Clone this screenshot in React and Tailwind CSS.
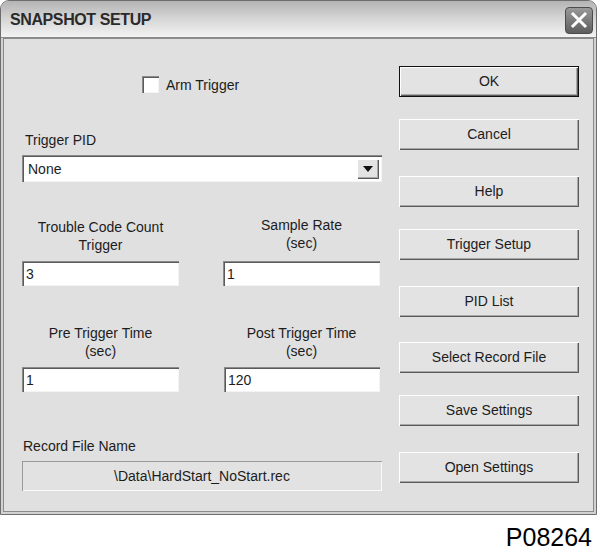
import React from "react";

const btnShadow =
  "shadow-[inset_1px_1px_0_#ffffff,inset_-1px_-1px_0_#5a5a5a,inset_-2px_-2px_0_#a8a8a8]";

function Btn({ children, className = "", isDefault = false }) {
  return (
    <div
      className={
        "w-[180px] h-[31px] flex items-center justify-center bg-[#e3e3e3] text-[14px] text-[#1c1c1c] " +
        btnShadow +
        (isDefault ? " outline outline-1 outline-[#111] -outline-offset-1 border border-[#111]" : "") +
        " " +
        className
      }
    >
      <span className={isDefault ? "-mt-px" : ""}>{children}</span>
    </div>
  );
}

function Input({ value, className = "" }) {
  return (
    <div
      className={
        "h-[25px] bg-white flex items-center pl-[4px] text-[14px] text-[#1c1c1c] shadow-[inset_1px_1px_0_#8a8a8a,inset_2px_2px_0_#5a5a5a,inset_-1px_-1px_0_#f4f4f4] " +
        className
      }
    >
      {value}
    </div>
  );
}

export default function App() {
  return (
    <div
      className="w-[600px] h-[551px] bg-white overflow-hidden"
      style={{ fontFamily: '"Liberation Sans", Arial, sans-serif' }}
    >
      <div className="w-[597px] h-[515px] border border-[#6e6e6e] rounded-t-[9px] bg-[#d2d2d2] flex flex-col overflow-hidden">
        {/* Title bar */}
        <div className="h-[37px] shrink-0 flex items-center justify-between pl-[9px] pr-[3px] bg-gradient-to-b from-[#b4b4b4] via-[#d6d6d6] to-[#f3f3f3] border-b border-[#8a8a8a]">
          <span className="text-[16px] font-bold tracking-[-0.4px] text-[#2a2a2a] mt-[1px]">
            SNAPSHOT SETUP
          </span>
          <div className="w-[28px] h-[27px] mt-[2px] rounded-[4px] border border-[#4c4c4c] bg-gradient-to-b from-[#9a9a9a] to-[#5e5e5e] flex items-center justify-center">
            <svg width="18" height="18" viewBox="0 0 18 18">
              <path d="M3 3 L15 15 M15 3 L3 15" stroke="#ffffff" strokeWidth="3" strokeLinecap="square" />
            </svg>
          </div>
        </div>

        {/* Body */}
        <div className="flex-1 mx-[2px] mb-[2px] border border-[#8a8a8a] bg-[#e0e0e0] flex pl-[18px]">
          {/* Left column */}
          <div className="w-[360px] flex flex-col text-[14px] text-[#1c1c1c] leading-[18px]">
            <div className="mt-[37px] h-[17px] flex items-center pl-[120px]">
              <div className="w-[17px] h-[17px] bg-white shadow-[inset_1px_1px_0_#8a8a8a,inset_2px_2px_0_#5a5a5a,inset_-1px_-1px_0_#f4f4f4]" />
              <span className="ml-[7px]">Arm Trigger</span>
            </div>

            <div className="mt-[38px] h-[18px] pl-[3px]">Trigger PID</div>

            <div className="mt-[6px] h-[27px] bg-white flex items-center justify-between pl-[6px] pr-[3px] shadow-[inset_1px_1px_0_#8a8a8a,inset_2px_2px_0_#5a5a5a,inset_-1px_-1px_0_#f4f4f4]">
              <span>None</span>
              <div className={"w-[22px] h-[20px] bg-[#e3e3e3] flex items-center justify-center " + btnShadow}>
                <svg width="10" height="6" viewBox="0 0 10 6">
                  <path d="M0 0 L10 0 L5 6 Z" fill="#111" />
                </svg>
              </div>
            </div>

            <div className="mt-[36px] grid grid-cols-[157px_157px] gap-x-[44px]">
              <div className="text-center h-[36px]">
                Trouble Code Count
                <br />
                Trigger
              </div>
              <div className="text-center h-[36px] -mt-[2px]">
                Sample Rate
                <br />
                (sec)
              </div>
              <Input value="3" className="mt-[7px]" />
              <Input value="1" className="mt-[7px]" />
            </div>

            <div className="mt-[38px] grid grid-cols-[157px_157px] gap-x-[44px]">
              <div className="text-center h-[36px]">
                Pre Trigger Time
                <br />
                (sec)
              </div>
              <div className="text-center h-[36px]">
                Post Trigger Time
                <br />
                (sec)
              </div>
              <Input value="1" className="mt-[7px]" />
              <Input value="120" className="mt-[7px] ml-[1px]" />
            </div>

            <div className="mt-[45px] h-[18px] pl-[1px]">Record File Name</div>
            <div className="mt-[6px] h-[30px] flex items-center justify-center bg-[#e2e2e2] shadow-[inset_1px_1px_0_#9a9a9a,inset_-1px_-1px_0_#fafafa]">
              \Data\HardStart_NoStart.rec
            </div>
          </div>

          {/* Right column */}
          <div className="ml-[17px] flex flex-col">
            <Btn isDefault className="mt-[27px]">OK</Btn>
            <Btn className="mt-[22px]">Cancel</Btn>
            <Btn className="mt-[26px]">Help</Btn>
            <Btn className="mt-[22px]">Trigger Setup</Btn>
            <Btn className="mt-[26px]">PID List</Btn>
            <Btn className="mt-[25px]">Select Record File</Btn>
            <Btn className="mt-[22px]">Save Settings</Btn>
            <Btn className="mt-[26px]">Open Settings</Btn>
          </div>
        </div>
      </div>

      <div className="w-[592px] text-right text-[25px] leading-[25px] mt-[10px] text-black">
        P08264
      </div>
    </div>
  );
}
